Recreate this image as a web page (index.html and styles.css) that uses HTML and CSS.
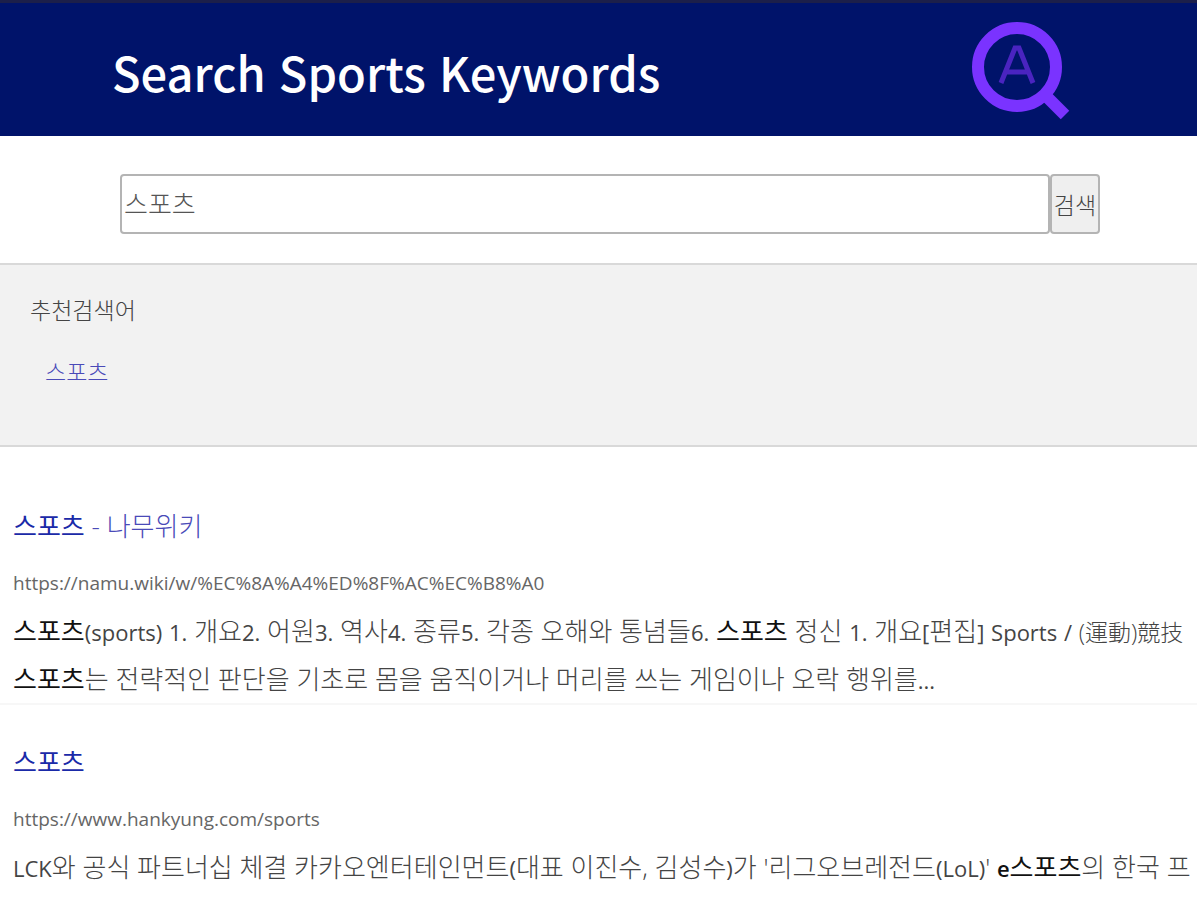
FILE: index.html
```html
<!DOCTYPE html>
<html lang="ko">
<head>
<meta charset="UTF-8">
<meta name="viewport" content="width=device-width, initial-scale=1.0">
<title>Search Sports Keywords</title>
<link rel="stylesheet" href="styles.css">
</head>
<body>
    <header class="header">
        <h1>Search Sports Keywords</h1>
        <svg class="logo" viewBox="0 0 98 98" aria-hidden="true">
            <circle cx="45" cy="45" r="39" fill="none" stroke="#7a33ff" stroke-width="12"/>
            <path d="M69 69 L93 93" fill="none" stroke="#7a33ff" stroke-width="12"/>
            <path d="M29 61 L43 26 H47 L61 61 M34 50 H56" fill="none" stroke="#4a24c0" stroke-width="5"/>
        </svg>
    </header>

    <form class="search-form">
        <input id="keyword" class="search-input" type="text" value="스포츠" aria-label="검색어">
        <button class="search-button" type="button">검색</button>
    </form>

    <section class="recommend">
        <h2>추천검색어</h2>
        <a href="#">스포츠</a>
    </section>

    <main class="results">
        <article class="result">
            <h3><a href="#"><b>스포츠</b> - 나무위키</a></h3>
            <p class="url">https://namu.wiki/w/%EC%8A%A4%ED%8F%AC%EC%B8%A0</p>
            <p class="desc"><b>스포츠</b><span class="en">(sports)</span> <span class="en">1.</span> 개요<span class="en">2.</span> 어원<span class="en">3.</span> 역사<span class="en">4.</span> 종류<span class="en">5.</span> 각종 오해와 통념들<span class="en">6.</span> <b>스포츠</b> 정신 <span class="en">1.</span> 개요<span class="en">[</span>편집<span class="en">]</span> <span class="en">Sports</span> <span class="en">/</span> <span class="hanja">(運動)競技</span><br><b>스포츠</b>는 전략적인 판단을 기초로 몸을 움직이거나 머리를 쓰는 게임이나 오락 행위를<span class="en">...</span></p>
        </article>
        <article class="result">
            <h3><a href="#"><b>스포츠</b></a></h3>
            <p class="url">https://www.hankyung.com/sports</p>
            <p class="desc"><span class="en">LCK</span>와 공식 파트너십 체결 카카오엔터테인먼트<span class="en">(</span>대표 이진수, 김성수<span class="en">)</span>가 '리그오브레전드<span class="en">(LoL)</span>' <b><span class="en">e</span>스포츠</b>의 한국 프</p>
        </article>
    </main>
</body>
</html>
```
FILE: styles.css
```css
* {
    box-sizing: border-box;
}
body {
    margin: 0;
    font-family: "Noto Sans CJK KR", sans-serif;
    font-size: 26px;
    font-weight: 300;
    color: #444;
    background: #fff;
}
h1, h2, h3, p {
    margin: 0;
}
a {
    color: #4a4ab8;
    text-decoration: none;
}
.header {
    display: flex;
    justify-content: space-between;
    align-items: center;
    height: 136px;
    padding: 2px 127px 0 112px;
    border-top: 3px solid #1c1f4a;
    background: #00136a;
}
.header h1 {
    padding-top: 2px;
    font-size: 47px;
    font-weight: 500;
    line-height: 64px;
    color: #fff;
}
.logo {
    width: 98px;
    height: 98px;
}
.search-form {
    display: flex;
    padding: 38px 97px 29px 120px;
}
.search-input {
    flex: 1;
    min-width: 0;
    height: 60px;
    padding: 0 2px 3px;
    border: 2px solid #b4b4b4;
    border-radius: 4px;
    font: inherit;
    color: #555;
}
.search-button {
    width: 50px;
    height: 60px;
    padding: 0;
    border: 2px solid #b4b4b4;
    border-radius: 4px;
    background: #efefef;
    font: inherit;
    font-size: 23px;
    color: #444;
    white-space: nowrap;
}
.recommend {
    height: 184px;
    padding: 28px 30px;
    border-top: 2px solid #d9d9d9;
    border-bottom: 2px solid #d9d9d9;
    background: #f2f2f2;
}
.recommend h2 {
    font-size: 23px;
    font-weight: 300;
    line-height: 32px;
}
.recommend a {
    display: inline-block;
    margin: 30px 0 0 15px;
    font-size: 23px;
    line-height: 32px;
}
.results {
    overflow: hidden;
}
.result {
    padding: 37px 0 0 13px;
    border-bottom: 2px solid #f7f7f7;
}
.result:first-child {
    padding-top: 59px;
}
.result:last-child {
    border-bottom: none;
}
.result h3,
.result .desc {
    font-family: "Open Sans", "Noto Sans CJK KR", sans-serif;
    font-size: 26px;
    font-weight: 300;
}
.result h3 {
    line-height: 40px;
}
.result h3 b {
    color: #1a2aa8;
}
.result .url {
    margin-top: 21px;
    font-family: "Open Sans", sans-serif;
    font-size: 19px;
    font-weight: 400;
    line-height: 32px;
    color: #666;
}
.result .desc {
    margin-top: 8px;
    line-height: 48px;
    white-space: nowrap;
}
.result .desc b {
    color: #111;
}
.result .en {
    font-family: "Open Sans", sans-serif;
    font-size: 22px;
    font-weight: 400;
    line-height: 32px;
}
.result b .en {
    font-weight: 600;
}
.result .hanja {
    font-size: 23px;
    line-height: 32px;
}
```
